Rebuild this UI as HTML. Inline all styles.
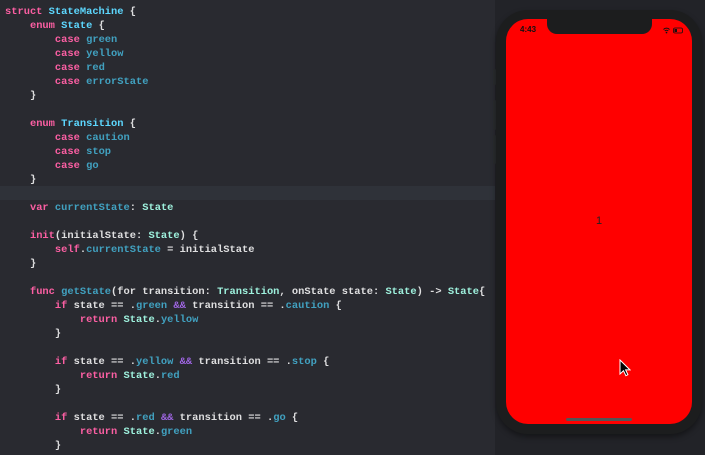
<!DOCTYPE html>
<html><head><style>
body{margin:0;width:705px;height:455px;background:#292a30;overflow:hidden;position:relative;font-family:"Liberation Mono",monospace}
pre{margin:0;position:absolute;left:5px;top:5px;font-family:"Liberation Mono",monospace;font-size:10.4px;line-height:14px;color:#dfdfe0;font-weight:bold}
.k{color:#fc5fa3}.t{color:#5dd8ff}.c{color:#41a1c0}.u{color:#9ef1dd}.p{color:#a167e6}
.hl{position:absolute;left:0;top:186px;width:495px;height:14px;background:#2f3239}
.right{position:absolute;left:495px;top:0;width:210px;height:455px;background:#222328}
.phone{position:absolute;left:496px;top:10px;width:206px;height:424px;background:#1c1d1e;border-radius:32px;box-shadow:0 3px 6px rgba(0,0,0,.4)}
.screen{position:absolute;left:506px;top:19px;width:186px;height:405px;background:#ff0000;border-radius:22px;overflow:hidden}
.notch{position:absolute;left:41px;top:-2px;width:105px;height:17px;background:#1c1d1e;border-radius:0 0 10px 10px}
.btn{position:absolute;left:493px;width:3px;background:#2a2b2e;border-radius:1px}
</style></head><body>
<div class="hl"></div>
<div class="right"></div>
<div class="btn" style="top:69px;height:16px"></div>
<div class="btn" style="top:100px;height:30px"></div>
<div class="btn" style="top:135px;height:29px"></div>
<div class="phone"></div>
<div class="screen">
<div class="notch"></div>
<div style="position:absolute;left:14px;top:6px;font:bold 8px 'Liberation Sans',sans-serif;color:#111">4:43</div>
<svg style="position:absolute;left:157px;top:8px" width="22" height="7" viewBox="0 0 22 7"><path d="M0.5 2.5a4 4 0 0 1 6 0M1.8 4a2.2 2.2 0 0 1 3.4 0" stroke="#111" stroke-width="1" fill="none"/><circle cx="3.5" cy="5.6" r="0.8" fill="#111"/><rect x="10.5" y="1" width="9" height="5" rx="1.5" stroke="#111" stroke-width="0.8" fill="none"/><rect x="11.5" y="2" width="2.5" height="3" fill="#111"/></svg>
<div style="position:absolute;left:90px;top:196px;font:11px 'Liberation Sans',sans-serif;color:#222">1</div>
<div style="position:absolute;left:60px;top:399px;width:66px;height:3px;background:#555;border-radius:2px"></div>
<svg style="position:absolute;left:113px;top:340px" width="12" height="18" viewBox="0 0 12 18"><path d="M1 1v14l3.5-3.3 2.4 5 2-1-2.3-4.8H11z" fill="#000" stroke="#fff" stroke-width="1"/></svg>
</div>
<pre><span class="k">struct</span> <span class="t">StateMachine</span> {
    <span class="k">enum</span> <span class="t">State</span> {
        <span class="k">case</span> <span class="c">green</span>
        <span class="k">case</span> <span class="c">yellow</span>
        <span class="k">case</span> <span class="c">red</span>
        <span class="k">case</span> <span class="c">errorState</span>
    }

    <span class="k">enum</span> <span class="t">Transition</span> {
        <span class="k">case</span> <span class="c">caution</span>
        <span class="k">case</span> <span class="c">stop</span>
        <span class="k">case</span> <span class="c">go</span>
    }

    <span class="k">var</span> <span class="c">currentState</span>: <span class="u">State</span>

    <span class="k">init</span>(initialState: <span class="u">State</span>) {
        <span class="k">self</span>.<span class="c">currentState</span> = initialState
    }

    <span class="k">func</span> <span class="c">getState</span>(for transition: <span class="u">Transition</span>, onState state: <span class="u">State</span>) -&gt; <span class="u">State</span>{
        <span class="k">if</span> state == .<span class="c">green</span> <span class="p">&amp;&amp;</span> transition == .<span class="c">caution</span> {
            <span class="k">return</span> <span class="u">State</span>.<span class="c">yellow</span>
        }

        <span class="k">if</span> state == .<span class="c">yellow</span> <span class="p">&amp;&amp;</span> transition == .<span class="c">stop</span> {
            <span class="k">return</span> <span class="u">State</span>.<span class="c">red</span>
        }

        <span class="k">if</span> state == .<span class="c">red</span> <span class="p">&amp;&amp;</span> transition == .<span class="c">go</span> {
            <span class="k">return</span> <span class="u">State</span>.<span class="c">green</span>
        }
</pre>
</body></html>
